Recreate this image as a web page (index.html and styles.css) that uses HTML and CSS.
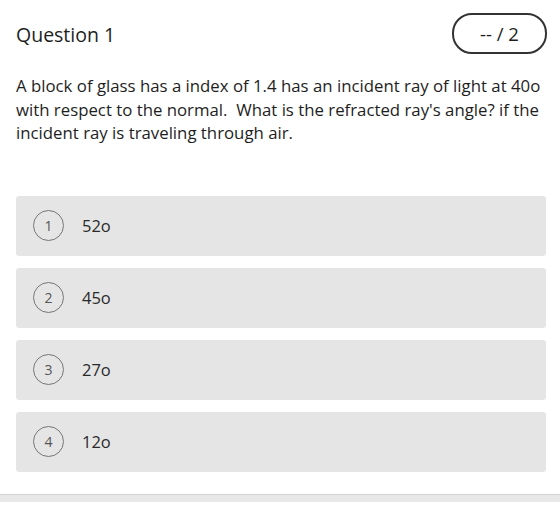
FILE: index.html
```html
<!DOCTYPE html>
<html>
<head>
    <title>Question 1</title>
    <link rel="stylesheet" href="styles.css">
</head>
<body>
    <div class="question">
        <div class="question-header">
            <h2 class="question-title">Question 1</h2>
            <div class="points">-- / 2</div>
        </div>
        <p class="question-text">A block of glass has a index of 1.4 has an incident ray of light at 40o with respect to the normal.&nbsp; What is the refracted ray's angle? if the incident ray is traveling through air.</p>
        <div class="answers">
            <div class="answer">
                <span class="answer-num">1</span>
                <span class="answer-text">52o</span>
            </div>
            <div class="answer">
                <span class="answer-num">2</span>
                <span class="answer-text">45o</span>
            </div>
            <div class="answer">
                <span class="answer-num">3</span>
                <span class="answer-text">27o</span>
            </div>
            <div class="answer">
                <span class="answer-num">4</span>
                <span class="answer-text">12o</span>
            </div>
        </div>
    </div>
    <div class="footer-bar"></div>
</body>
</html>
```

FILE: styles.css
```css
body {
    margin: 0;
    background: #fff;
    font-family: "Open Sans", "Liberation Sans", sans-serif;
    color: #1e1e1e;
}
.question {
    padding: 13px 13px 0 16px;
}
.question-header {
    display: flex;
    justify-content: space-between;
    align-items: center;
}
.question-title {
    margin: 1px 0 0 0;
    font-size: 19.5px;
    font-weight: 500;
    color: #1e1e1e;
}
.points {
    width: 91px;
    height: 37px;
    border: 2px solid #333;
    border-radius: 20px;
    display: flex;
    align-items: center;
    justify-content: center;
    font-size: 18.5px;
    color: #1e1e1e;
}
.question-text {
    margin: 20px 0 0 0;
    font-size: 16.8px;
    line-height: 23.5px;
    color: #1e1e1e;
}
.answers {
    display: flex;
    flex-direction: column;
    gap: 12px;
    margin: 51px 1px 0 0;
}
.answer {
    height: 60px;
    background: #e5e5e5;
    border-radius: 3px;
    display: flex;
    align-items: center;
    padding-left: 17px;
}
.answer-num {
    width: 29px;
    height: 29px;
    border: 1.5px solid #777;
    border-radius: 50%;
    display: flex;
    align-items: center;
    justify-content: center;
    font-size: 14px;
    color: #555;
}
.answer-text {
    margin-left: 18px;
    font-size: 16.5px;
    color: #2a2a2a;
}
.footer-bar {
    margin-top: 22px;
    height: 7px;
    border-top: 1px solid #d2d2d2;
    background: #e8e8e8;
}
```
